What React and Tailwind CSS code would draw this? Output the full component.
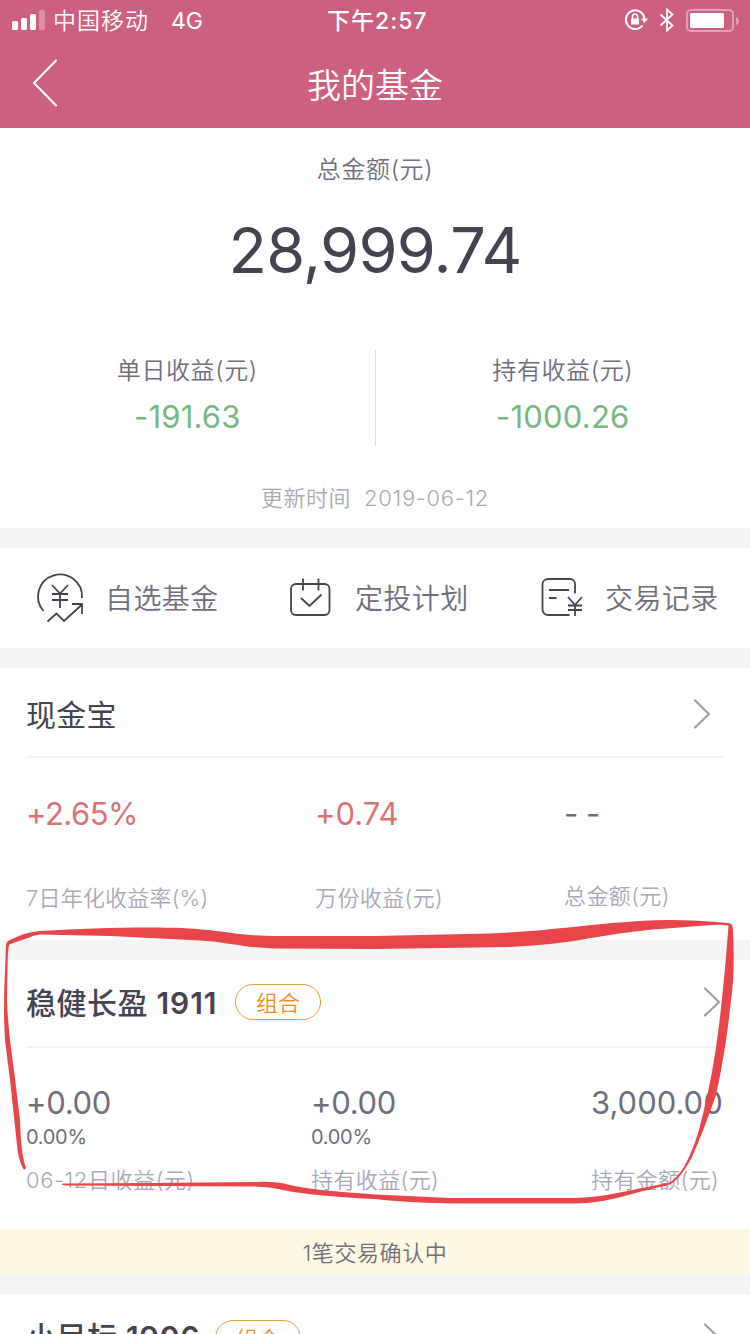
const shortcuts = [
  { label: "自选基金", icon: WatchIcon },
  { label: "定投计划", icon: PlanIcon },
  { label: "交易记录", icon: RecordIcon },
];

function WatchIcon() {
  return (
    <svg className="h-[52px] w-[52px] overflow-visible" viewBox="0 0 52 52" fill="none" stroke="#454350" strokeWidth="1.800">
      <path d="M9.500 38A22 22 0 1 1 48 25" />
      <path d="M18 12l8 8.500 8-8.500M26 20.500V35M18 21h16M18 27h16" />
      <path d="M13.500 48.500l9-8 7.500 7.500L47.500 32M38 31h10v10" />
    </svg>
  );
}

function PlanIcon() {
  return (
    <svg className="h-[52px] w-[52px]" viewBox="0 0 52 52" fill="none" stroke="#454350" strokeWidth="1.800">
      <rect x="7" y="11" width="38.500" height="31" rx="5" />
      <path d="M19 5.500v12M34.500 5.500v12M17 25l8.500 8L37.500 21.500" />
    </svg>
  );
}

function RecordIcon() {
  return (
    <svg className="h-[52px] w-[52px]" viewBox="0 0 52 52" fill="none" stroke="#454350" strokeWidth="1.800">
      <path d="M41 20.500V11a5 5 0 0 0-5-5H14a5.500 5.500 0 0 0-5.500 5v25.500a5.500 5.500 0 0 0 5.500 5.500h21.500" />
      <path d="M15 17h20M15 25h7.500" />
      <path d="M34 24l7 8 7-8M41 32v11M34 32.500h14M34 37h14" />
    </svg>
  );
}

function Chevron({ className }) {
  return (
    <svg className={`h-8 w-5 ${className}`} viewBox="0 0 20 32" fill="none" stroke="#a0a0a0" strokeWidth="2.200" strokeLinecap="round">
      <path d="M3 2.500L17 16 3 29.500" />
    </svg>
  );
}

function StatusBar() {
  return (
    <div className="flex h-10 items-center">
      <svg className="ml-3 h-5 w-[33px]" viewBox="0 0 33 20" fill="#fff">
        <rect x="0" y="11" width="6" height="9" rx="1.500" />
        <rect x="9" y="8" width="6" height="12" rx="1.500" />
        <rect x="18" y="4" width="6" height="16" rx="1.500" />
        <rect x="27" y="0" width="6" height="20" rx="1.500" opacity=".3" />
      </svg>
      <span className="ml-[8px] w-[118px] pt-[2px] text-[23px] font-[350] tracking-[1px]">中国移动</span>
      <span className="w-[156px] pt-[2px] text-[23px]">4G</span>
      <span className="w-[297px] pt-[2px] text-[23px] font-medium tracking-[1px]">下午2:57</span>
      <svg className="h-6 w-6" viewBox="0 0 24 24" fill="none" stroke="#fff" strokeWidth="2">
        <path d="M18.500 17.500A9.300 9.300 0 1 1 20.500 11" />
        <path d="M17 10.500h7l-3.500 4.500z" fill="#fff" stroke="none" />
        <rect x="7" y="10.500" width="8" height="6" rx=".5" fill="#fff" stroke="none" />
        <path d="M8.500 11V8.500a2.500 2.500 0 0 1 5 0V11" strokeWidth="1.500" />
      </svg>
      <svg className="ml-[11px] h-6 w-4" viewBox="0 0 16 24" fill="none" stroke="#fff" strokeWidth="1.800">
        <path d="M1.500 6.500l12 11L8 22.500v-21l5.500 5-12 11" />
      </svg>
      <svg className="ml-[11px] h-6 w-[54px]" viewBox="0 0 54 24" fill="#fff">
        <rect x="1" y="2" width="46" height="21" rx="4" fill="none" stroke="#fff" strokeWidth="2" opacity=".4" />
        <rect x="4" y="5" width="34" height="15" rx="1.500" />
        <path d="M50 9v8q3-1 3-4t-3-4z" opacity=".4" />
      </svg>
    </div>
  );
}

function Metric({ label, value }) {
  return (
    <div className="flex flex-1 flex-col items-center">
      <p className="flex h-10 items-center pt-[2px] text-[24px] font-[350] tracking-[0.6px] text-[#6f6d7c]">{label}</p>
      <p className="flex h-[52px] items-center pt-px text-[31px] tracking-[0.2px] text-[#76b881]">{value}</p>
    </div>
  );
}

function Tag() {
  return (
    <span className="flex h-9 w-[86px] items-center justify-center rounded-full border border-[#ee9a3a] pt-px text-[22px] font-[350] text-[#ee8e22]">
      组合
    </span>
  );
}

function FundTitle({ name, code, className }) {
  return (
    <h2 className={`text-[30px] tracking-[0.5px] text-[#454350] ${className}`}>
      <span className="font-medium">{name}</span>
      <span className="font-semibold tracking-[0.9px]"> {code}</span>
    </h2>
  );
}

// hand-drawn loop around the highlighted portfolio
function Marker() {
  return (
    <svg className="pointer-events-none absolute left-0 top-0 h-[1334px] w-[750px]" viewBox="0 0 750 1334" fill="#e8454b">
      <path d="M6 945Q6 942 10 940Q25 932 40 931C80 929 110 927.500 150 927.500C200 927.500 215 931 240 934Q255 936 280 936L375 936L490 933.500C550 931 590 924 640 921Q680 918.500 728 923Q733 923 733 930Q735 975 731 1000Q726 1050 716 1095Q704 1130 692 1157Q678 1184 665 1186C630 1193 610 1203 575 1203.500L450 1203.500Q400 1202 375 1199Q310 1196 283 1190Q272 1187 255 1186.500L65 1185.500Q58 1184 65 1183.500L150 1183L255 1182Q275 1181 290 1185Q310 1190 375 1194.500L450 1198L575 1198Q600 1197 625 1191.500L667 1183Q673 1183 684 1167Q696 1145 702 1118Q713 1075 719 1025Q724 985 728.500 925.500Q720 924 705 925.500L660 929Q630 931 580 940Q550 945 510 947L375 949L275 948.500C240 947.500 225 941 190 940L110 936L40 934.500Q33 935 28 938L10 944Q8 945 7.700 960L7 1000Q8 1030 14 1070L20 1120Q21 1155 26 1168L24 1170Q18 1160 17 1145L10 1080L5 1040Q3 1010 5 970Z" />
    </svg>
  );
}

export default function App() {
  return (
    <main className="relative h-[1334px] w-[750px] overflow-hidden bg-[#f4f4f4] font-['Inter','Noto_Sans_CJK_SC',sans-serif] leading-none whitespace-nowrap [font-feature-settings:'calt'_0]">
      <header className="h-32 bg-[#cd6080] text-white">
        <StatusBar />
        <div className="flex h-[88px] items-center">
          <svg className="ml-[30px] h-[52px] w-[30px]" viewBox="0 0 30 52" fill="none" stroke="#fff" strokeWidth="2.200" strokeLinecap="round" strokeLinejoin="round">
            <path d="M26 2.500L4 25 26 47.500" />
          </svg>
          <h1 className="mr-[60px] flex-1 pt-[3px] text-center text-[34px] font-[350]">我的基金</h1>
        </div>
      </header>

      <section className="h-[400px] bg-white pt-5 text-center">
        <p className="flex h-10 items-center justify-center pt-[3px] text-[24px] font-[350] tracking-[0.6px] text-[#6f6d7c]">总金额(元)</p>
        <p className="mt-[22px] flex h-20 items-center justify-center pt-px text-[63px] tracking-[-0.700px] text-[#454350]">28,999.74</p>
        <div className="mt-[60px] flex h-24">
          <Metric label="单日收益(元)" value="-191.63" />
          <div className="w-px bg-[#dcdcdc]" />
          <Metric label="持有收益(元)" value="-1000.26" />
        </div>
        <p className="mt-8 flex h-10 items-center justify-center gap-[13px] text-[22px] font-[350] text-[#a9a8b6]">
          <span className="tracking-[0.5px]">更新时间</span>
          <span className="tracking-[0.7px]">2019-06-12</span>
        </p>
      </section>

      <nav className="mt-5 flex h-[100px] bg-white pt-[2px]">
        {shortcuts.map(({ label, icon: Icon }) => (
          <div className="flex w-[250px] shrink-0 items-center gap-[19px] pl-[34px]" key={label}>
            <Icon />
            <span className="text-[28px] font-[350] tracking-[0.4px] text-[#6f6d7c]">{label}</span>
          </div>
        ))}
      </nav>

      <section className="mt-5 h-[272px] bg-white px-[26px]">
        <div className="flex h-[90px] items-center justify-between border-b-2 border-[#f3f3f3] pt-[4px]">
          <h2 className="pt-px text-[30px] tracking-[0.3px] text-[#454350]">现金宝</h2>
          <Chevron className="mr-3" />
        </div>
        <div className="flex h-[110px] items-center pt-px text-[31px] text-[#d97376]">
          <span className="w-[289px] tracking-[-0.5px]">+2.65%</span>
          <span className="w-[249px]">+0.74</span>
          <span className="text-[#6f6d7c] tracking-[-0.5px]">- -</span>
        </div>
        <div className="flex h-[60px] items-center text-[22px] font-[350] text-[#a9a8b6]">
          <span className="w-[289px] tracking-[0.2px]">7日年化收益率(%)</span>
          <span className="w-[249px] tracking-[0.4px]">万份收益(元)</span>
          <span className="pb-[5px] tracking-[0.4px]">总金额(元)</span>
        </div>
      </section>

      <section className="mt-5 h-[269px] bg-white px-[26px]">
        <div className="flex h-[88px] items-center border-b-2 border-[#f3f3f3] pb-[2px]">
          <FundTitle name="稳健长盈" code="1911" className="w-[209px] pt-[2px]" />
          <Tag />
          <Chevron className="ml-auto mr-[2px]" />
        </div>
        <div className="flex pt-[28px] text-[#6f6d7c]">
          <div className="w-[285px] shrink-0">
            <p className="flex h-[52px] items-center text-[31px] tracking-[-0.3px]">+0.00</p>
            <p className="flex h-[18px] items-center text-[20px] tracking-[-0.3px]">0.00%</p>
            <p className="mt-[14px] flex h-10 items-center text-[22px] font-[350] tracking-[0.6px] text-[#a9a8b6]">06-12日收益(元)</p>
          </div>
          <div className="w-[280px] shrink-0">
            <p className="flex h-[52px] items-center text-[31px] tracking-[-0.3px]">+0.00</p>
            <p className="flex h-[18px] items-center text-[20px] tracking-[-0.3px]">0.00%</p>
            <p className="mt-[14px] flex h-10 items-center text-[22px] font-[350] tracking-[0.4px] text-[#a9a8b6]">持有收益(元)</p>
          </div>
          <div className="shrink-0">
            <p className="flex h-[52px] items-center text-[31px]">3,000.00</p>
            <p className="mt-[32px] flex h-10 items-center text-[22px] font-[350] tracking-[0.4px] text-[#a9a8b6]">持有金额(元)</p>
          </div>
        </div>
      </section>
      <p className="flex h-[45px] items-center justify-center bg-[#fef9e1] pt-[2px] text-[22px] font-[350] tracking-[0.6px] text-[#6f6d7c]">1笔交易确认中</p>

      <section className="mt-5 bg-white px-[26px]">
        <div className="flex h-[88px] items-center">
          <FundTitle name="小目标" code="1906" className="w-[189px] pb-[2px]" />
          <Tag />
          <Chevron className="ml-auto mr-[2px]" />
        </div>
      </section>

      <Marker />
    </main>
  );
}
